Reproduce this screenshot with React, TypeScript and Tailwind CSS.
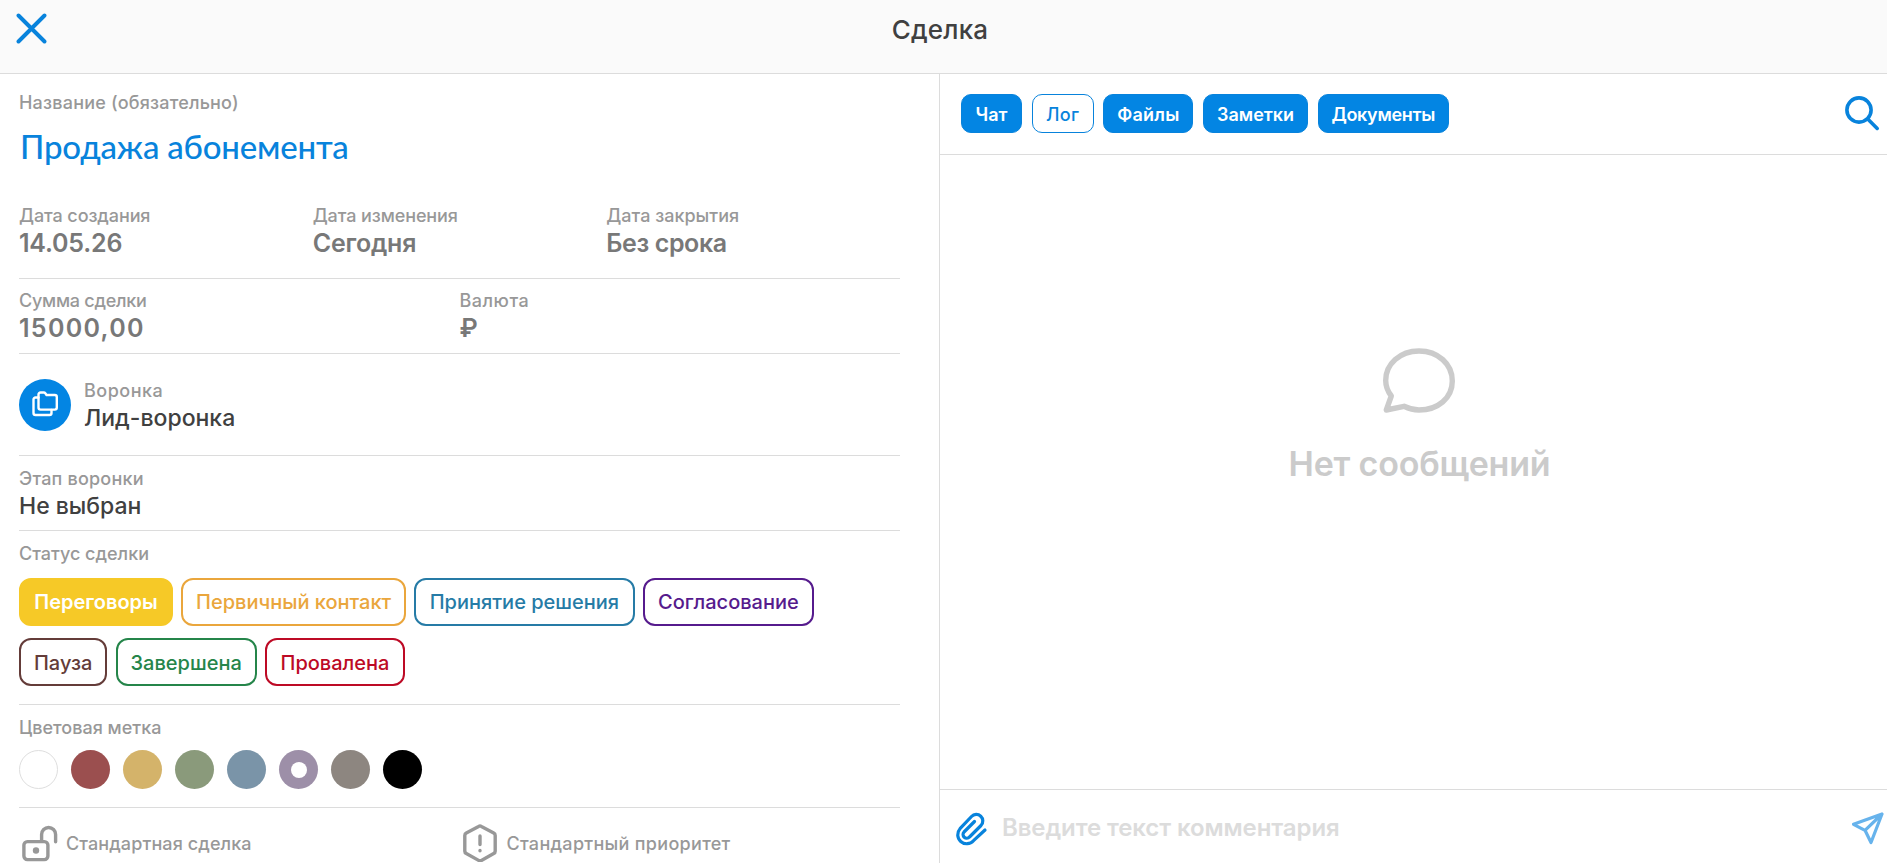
import { useState } from "react";

const statuses = [
  { name: "Переговоры", cls: "w-[154px] border-[#f6c927] text-[#f6c927]", fill: "bg-[#f6c927]" },
  { name: "Первичный контакт", cls: "w-[224.6px] border-[#eaa63c] text-[#eaa63c]", fill: "bg-[#eaa63c]" },
  { name: "Принятие решения", cls: "w-[220.4px] border-[#267ba6] text-[#267ba6]", fill: "bg-[#267ba6]" },
  { name: "Согласование", cls: "w-[171px] border-[#561b8d] text-[#561b8d]", fill: "bg-[#561b8d]" },
  { name: "Пауза", cls: "w-[88.4px] border-[#643c39] pt-px text-[#643c39]", fill: "bg-[#643c39]" },
  { name: "Завершена", cls: "w-[141px] border-[#25854a] pt-px text-[#25854a]", fill: "bg-[#25854a]" },
  { name: "Провалена", cls: "w-[140px] border-[#bd0a25] pt-px text-[#bd0a25]", fill: "bg-[#bd0a25]" },
];

const colors = [
  "bg-white border border-[#dedede]",
  "bg-[#9b4f4f]",
  "bg-[#d4b36a]",
  "bg-[#8a9a7b]",
  "bg-[#7a94a8]",
  "bg-[#9d8fa8]",
  "bg-[#8d8680]",
  "bg-black",
];

const tabs = [
  { name: "Чат", cls: "w-[61px]" },
  { name: "Лог", cls: "w-[62px] tracking-[0.4px]" },
  { name: "Файлы", cls: "w-[90px] tracking-[0.2px]" },
  { name: "Заметки", cls: "w-[105px]" },
  { name: "Документы", cls: "w-[131px] tracking-[-0.3px]" },
];

function Label({ children, className = "" }: any) {
  return <div className={`h-6 text-[18px] leading-[26px] text-[#989898] whitespace-nowrap ${className}`}>{children}</div>;
}

function Value({ children, className = "tracking-[-0.2px]" }: any) {
  return (
    <div className={`h-8 text-[25px] leading-[33px] font-semibold text-[#787878] whitespace-nowrap ${className}`}>
      {children}
    </div>
  );
}

export default function App() {
  const [status, setStatus] = useState("Переговоры");
  const [color, setColor] = useState(5);
  const [text, setText] = useState("");
  const [outlined, setOutlined] = useState("Лог");

  return (
    <div className="flex h-[863px] flex-col overflow-hidden bg-white font-['Inter',sans-serif] font-medium text-[#404040]">
      {/* Header */}
      <header className="flex h-[74px] shrink-0 border-b border-[#dcdcdc] bg-[#fafafa]">
        <button className="mt-[13px] ml-4 h-[31px] w-[31px]">
          <svg width="31" height="31" viewBox="0 0 31 31" fill="none" stroke="#0883dc" strokeWidth="3.9" strokeLinecap="round">
            <path d="M2.5 2.5 28.5 28.5M28.5 2.5 2.5 28.5" />
          </svg>
        </button>
        <h1 className="mt-[10px] mr-[54px] flex-1 text-center text-[26px] leading-10 font-medium tracking-[0.2px]">Сделка</h1>
      </header>

      <div className="flex min-h-0 flex-1">
        {/* Deal card */}
        <section className="w-[939px] shrink-0 overflow-hidden pr-[39px] pl-[19px]">
          <div className="pt-4">
            <Label className="tracking-[0.2px]">Название (обязательно)</Label>
            <div className="mt-[9px] h-[45px] pl-px font-['Lato',sans-serif] text-[33px] leading-[47px] tracking-[-0.2px] text-[#0883dc]">
              Продажа абонемента
            </div>
          </div>

          <div className="mt-[35px] grid grid-cols-3 border-b border-[#dcdcdc] pb-[19px]">
            <div>
              <Label className="tracking-[-0.1px]">Дата создания</Label>
              <Value>14.05.26</Value>
            </div>
            <div>
              <Label className="tracking-[-0.1px]">Дата изменения</Label>
              <Value>Сегодня</Value>
            </div>
            <div>
              <Label>Дата закрытия</Label>
              <Value className="tracking-[-0.4px]">Без срока</Value>
            </div>
          </div>

          <div className="grid grid-cols-2 border-b border-[#dcdcdc] pt-[9px] pb-[9px]">
            <div>
              <Label className="tracking-[-0.25px]">Сумма сделки</Label>
              <Value className="tracking-[1.3px]">15000,00</Value>
            </div>
            <div>
              <Label className="tracking-[0.5px]">Валюта</Label>
              <Value>₽</Value>
            </div>
          </div>

          <div className="flex items-center border-b border-[#dcdcdc] pt-[25px] pb-6">
            <div className="flex h-[52px] w-[52px] items-center justify-center rounded-full bg-[#0385e3] pb-[2px]">
              <svg width="28" height="28" viewBox="0 0 28 28" fill="none" stroke="white" strokeWidth="2.4" strokeLinejoin="round" strokeLinecap="round">
                <path d="M7.5 4.5a2 2 0 0 1 2-2h3.2a2 2 0 0 1 1.6.8l1.2 1.7h8.3a2 2 0 0 1 2 2v10.6a2 2 0 0 1-2 2H9.5a2 2 0 0 1-2-2z" />
                <path d="M7.5 7.5H4.5a2 2 0 0 0-2 2v13.5a2 2 0 0 0 2 2h14a2 2 0 0 0 2-2v-3" />
              </svg>
            </div>
            <div className="-my-[2px] ml-[13px]">
              <Label className="pt-px tracking-[0.5px]">Воронка</Label>
              <div className="h-8 pt-[2px] text-[23px] leading-[31px]">Лид-воронка</div>
            </div>
          </div>

          <div className="border-b border-[#dcdcdc] py-[10px]">
            <Label className="tracking-[0.2px]">Этап воронки</Label>
            <div className="h-[30px] text-[23px] leading-8">Не выбран</div>
          </div>

          <div className="border-b border-[#dcdcdc] pt-[10px] pb-[18px]">
            <Label>Статус сделки</Label>
            <div className="mt-[13px] flex flex-wrap gap-x-[8.3px] gap-y-3">
              {statuses.map((s) => (
                <button
                  key={s.name}
                  onClick={() => setStatus(s.name)}
                  className={`h-12 rounded-[12px] border-2 text-[20px] leading-none whitespace-nowrap ${s.cls} ${
                    status === s.name ? s.fill : ""
                  }`}
                >
                  <span className={status === s.name ? "font-semibold text-white" : ""}>{s.name}</span>
                </button>
              ))}
            </div>
          </div>

          <div className="border-b border-[#dcdcdc] pt-[10px] pb-[18px]">
            <Label>Цветовая метка</Label>
            <div className="mt-[11px] flex gap-[13px]">
              {colors.map((c, i) => (
                <button
                  key={c}
                  onClick={() => setColor(i)}
                  className={`flex h-[39px] w-[39px] items-center justify-center rounded-full ${c}`}
                >
                  {color === i && <span className="h-4 w-4 rounded-full bg-white" />}
                </button>
              ))}
            </div>
          </div>

          <div className="grid grid-cols-2 pt-4">
            <div className="flex items-center">
              <svg className="ml-[2px]" width="38" height="38" viewBox="0 0 38 38" fill="none" stroke="#989898" strokeWidth="3.4" strokeLinecap="round">
                <rect x="2.9" y="17.6" width="24" height="18" rx="3.5" />
                <path d="M20.6 17V10.5a7 7 0 0 1 14 0v7.2" />
                <circle cx="15" cy="26.5" r="3.2" fill="#989898" stroke="none" />
              </svg>
              <Label className="ml-[7px] tracking-[0.1px]">Стандартная сделка</Label>
            </div>
            <div className="flex items-center">
              <svg className="ml-[2px]" width="36" height="38" viewBox="0 0 36 38" fill="none" stroke="#989898" strokeWidth="3.4" strokeLinecap="round" strokeLinejoin="round">
                <path d="M16.6 2.4a2.8 2.8 0 0 1 2.8 0l12.3 6.6a2.8 2.8 0 0 1 1.5 2.5v15.6a2.8 2.8 0 0 1-1.5 2.5l-12.3 6.8a2.8 2.8 0 0 1-2.8 0L4.3 29.600a2.8 2.8 0 0 1-1.5-2.500V11.500a2.800 2.800 0 0 1 1.500-2.500z" />
                <path d="M18 12v8.500M18 26.500v.2" />
              </svg>
              <Label className="ml-[9px] tracking-[0.3px]">Стандартный приоритет</Label>
            </div>
          </div>
        </section>

        {/* Chat panel */}
        <section className="flex min-w-0 flex-1 flex-col border-l border-[#dcdcdc]">
          <div className="flex h-[81px] shrink-0 items-start border-b border-[#dcdcdc] pt-5 pl-[21px]">
            <div className="flex gap-[9.7px]">
              {tabs.map((t) => (
                <button
                  key={t.name}
                  onClick={() => setOutlined(t.name)}
                  className={`h-[39px] rounded-[10px] border border-[#0883dc] pt-[2px] text-[18px] leading-none ${t.cls} ${
                    outlined === t.name ? "bg-white text-[#0883dc]" : "bg-[#0385e3] font-semibold text-white"
                  }`}
                >
                  {t.name}
                </button>
              ))}
            </div>
            <svg className="mt-[2px] mr-[7px] ml-auto" width="36" height="36" viewBox="0 0 36 36" fill="none" stroke="#0883dc" strokeWidth="3.6" strokeLinecap="round">
              <circle cx="15" cy="14" r="12.1" />
              <path d="M24 23.2 33.2 32.4" />
            </svg>
          </div>

          <div className="flex min-h-0 flex-1 flex-col items-center pt-[191px] pl-[12px] text-[#cbcbcb]">
            <svg className="mr-px" width="74" height="68" viewBox="0 0 74 68" fill="none" stroke="currentColor" strokeWidth="5.4" strokeLinejoin="round">
              <path d="M9.3 50C5.5 45 3.7 40 3.7 34.5 3.7 18 18 5 37 5s33.3 13 33.3 30-14.3 29-33.3 29c-5.5 0-10.5-1.500-15-3.700L4.300 64z" />
            </svg>
            <p className="mt-[28px] text-[34px] leading-[44px] font-semibold tracking-[-0.2px]">Нет сообщений</p>
          </div>

          <div className="flex h-[74px] shrink-0 items-start border-t border-[#dcdcdc] pt-[17px] pl-3">
            <svg className="mt-[3px]" width="36" height="36" viewBox="0 0 36 36" fill="none" stroke="#0883dc" strokeWidth="3.2" strokeLinecap="round" strokeLinejoin="round">
              <path d="M33 20 21.5 30.7a9 9 0 0 1-13.5-12L19.5 6.5a6.5 6.5 0 0 1 9.5 9L17.5 27a3.6 3.6 0 0 1-5.5-5L22.5 11.5" />
            </svg>
            <input
              value={text}
              onChange={(e) => setText(e.target.value)}
              placeholder="Введите текст комментария"
              className="ml-[14px] h-10 flex-1 text-[24px] font-semibold tracking-[-0.1px] outline-none placeholder:text-[#dcdcdc]"
            />
            <svg className="mt-1 mr-[2px]" width="34" height="34" viewBox="0 0 34 34" fill="none" stroke="#67b3ec" strokeWidth="3.2" strokeLinecap="round" strokeLinejoin="round">
              <path d="M31 3 2.5 13.3l11.5 6L20 31.5zM31 3 14 19.3" />
            </svg>
          </div>
        </section>
      </div>
    </div>
  );
}
